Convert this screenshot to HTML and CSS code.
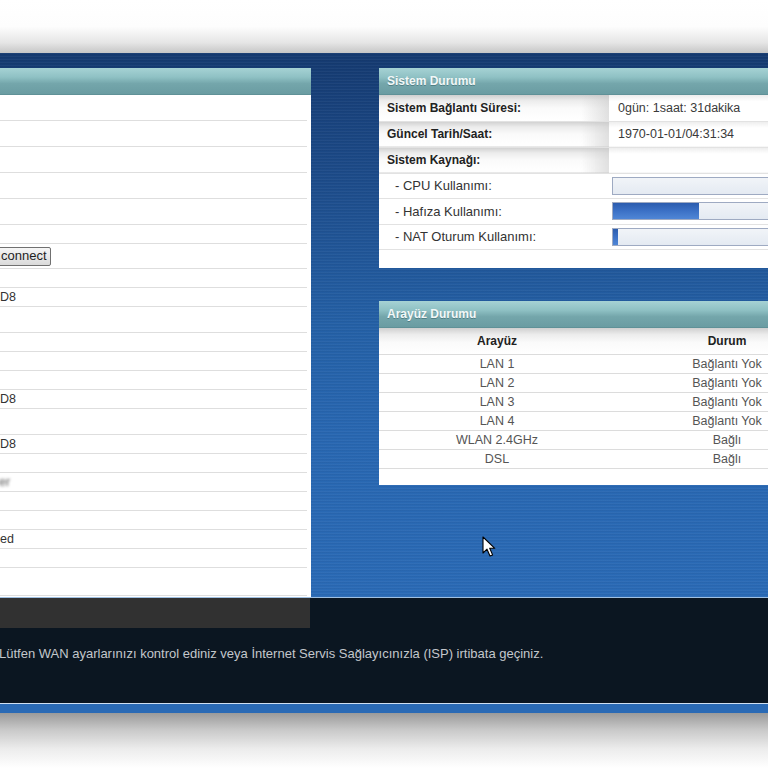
FILE: index.html
```html
<!DOCTYPE html>
<html lang="tr">
<head>
<meta charset="utf-8">
<title>Durum</title>
<link rel="stylesheet" href="styles.css">
</head>
<body>
<div class="screen">
  <div class="top-fade"></div>

  <main class="stage">
    <section class="panel panel-left">
      <div class="panel-head"></div>
      <div class="lrow lrow-first"></div>
      <div class="lrow lrow-tall"></div>
      <div class="lrow lrow-tall"></div>
      <div class="lrow lrow-tall"></div>
      <div class="lrow lrow-tall"></div>
      <div class="lrow"></div>
      <div class="lrow lrow-btn"><button class="btn" type="button">connect</button></div>
      <div class="lrow"></div>
      <div class="lrow"><span class="val">D8</span></div>
      <div class="lrow lrow-tall"></div>
      <div class="lrow"></div>
      <div class="lrow"></div>
      <div class="lrow"></div>
      <div class="lrow"><span class="val">D8</span></div>
      <div class="lrow lrow-tall"></div>
      <div class="lrow"><span class="val">D8</span></div>
      <div class="lrow"></div>
      <div class="lrow"><span class="val val-blur">er</span></div>
      <div class="lrow"></div>
      <div class="lrow"></div>
      <div class="lrow"><span class="val">ed</span></div>
      <div class="lrow"></div>
      <div class="lrow lrow-last"></div>
    </section>

    <div class="right-col">
      <section class="panel panel-status">
        <div class="panel-head">Sistem Durumu</div>
        <table class="status-table">
          <tr>
            <th class="lbl">Sistem Bağlantı Süresi:</th>
            <td class="val-cell">0gün: 1saat: 31dakika</td>
          </tr>
          <tr>
            <th class="lbl">Güncel Tarih/Saat:</th>
            <td class="val-cell">1970-01-01/04:31:34</td>
          </tr>
          <tr>
            <th class="lbl">Sistem Kaynağı:</th>
            <td class="val-cell"></td>
          </tr>
          <tr class="sub">
            <td class="sub-lbl">- CPU Kullanımı:</td>
            <td class="bar-cell"><div class="bar"><div class="bar-fill" style="width:0%"></div></div></td>
          </tr>
          <tr class="sub">
            <td class="sub-lbl">- Hafıza Kullanımı:</td>
            <td class="bar-cell"><div class="bar"><div class="bar-fill" style="width:36%"></div></div></td>
          </tr>
          <tr class="sub">
            <td class="sub-lbl">- NAT Oturum Kullanımı:</td>
            <td class="bar-cell"><div class="bar"><div class="bar-fill" style="width:2%"></div></div></td>
          </tr>
        </table>
      </section>

      <section class="panel panel-iface">
        <div class="panel-head">Arayüz Durumu</div>
        <table class="iface-table">
          <tr class="iface-head">
            <th>Arayüz</th>
            <th>Durum</th>
          </tr>
          <tr><td>LAN 1</td><td>Bağlantı Yok</td></tr>
          <tr><td>LAN 2</td><td>Bağlantı Yok</td></tr>
          <tr><td>LAN 3</td><td>Bağlantı Yok</td></tr>
          <tr><td>LAN 4</td><td>Bağlantı Yok</td></tr>
          <tr><td>WLAN 2.4GHz</td><td>Bağlı</td></tr>
          <tr><td>DSL</td><td>Bağlı</td></tr>
        </table>
      </section>
    </div>

    <svg class="cursor" width="14" height="22" viewBox="0 0 14 22" aria-hidden="true">
      <path d="M1 1 L1 17 L5 13.2 L8 20 L10.6 18.9 L7.7 12.3 L12.8 12.3 Z" fill="#fff" stroke="#000" stroke-width="1.1" stroke-linejoin="round"/>
    </svg>
  </main>

  <footer class="footer">
    <div class="footer-tab"></div>
    <p class="footer-msg">Lütfen WAN ayarlarınızı kontrol ediniz veya İnternet Servis Sağlayıcınızla (ISP) irtibata geçiniz.</p>
  </footer>

  <div class="bottom-band"></div>
  <div class="bottom-shadow"></div>
</div>
</body>
</html>
```

FILE: styles.css
```css
html, body {
  margin: 0;
  padding: 0;
}

body {
  width: 768px;
  height: 768px;
  overflow: hidden;
  background: #ffffff;
  font-family: "Liberation Sans", Arial, sans-serif;
  color: #333;
}

.screen {
  width: 768px;
  height: 768px;
  overflow: hidden;
  display: flex;
  flex-direction: column;
}

/* soft grey fade above the blue frame */
.top-fade {
  height: 53px;
  flex: none;
  background: linear-gradient(to bottom, #ffffff 0%, #fdfdfd 50%, #e6e6e6 80%, #c6c6c6 100%);
}

/* blue desktop with fine horizontal scan lines */
.stage {
  position: relative;
  flex: none;
  height: 544px;
  box-sizing: border-box;
  padding-top: 15px;
  display: flex;
  align-items: flex-start;
  gap: 68px;
  background:
    repeating-linear-gradient(to bottom, rgba(255,255,255,0.035) 0 1px, rgba(0,0,0,0.035) 1px 2px, rgba(0,0,0,0) 2px 3px),
    linear-gradient(to bottom, #153a70 0%, #19437e 12%, #1f5191 30%, #2460a6 50%, #2867b1 70%, #2a6ab5 100%);
}

.panel {
  background: #ffffff;
  flex: none;
}

.panel-head {
  height: 27px;
  box-sizing: border-box;
  border-bottom: 1px solid #5f9197;
  background: linear-gradient(to bottom, #a6d2d4 0%, #8fc1c4 35%, #74a6ab 60%, #6a9ca2 100%);
  color: #f2f8f8;
  font-weight: bold;
  font-size: 12px;
  line-height: 27px;
  padding-left: 8px;
  text-shadow: 0 1px 0 rgba(40, 80, 85, 0.45);
  white-space: nowrap;
}

/* left panel: only its value column is on screen */
.panel-left {
  width: 314px;
  height: 529px;
  margin-left: -3px;
  overflow: hidden;
}

.lrow {
  height: 18px;
  border-bottom: 1px solid #dedede;
  margin-right: 4px;
  display: flex;
  align-items: center;
  font-size: 12.5px;
  color: #333;
}

.lrow-first { height: 25px; }
.lrow-tall { height: 25px; }
.lrow-btn { height: 24px; }
.lrow-last { height: 27px; }

.val {
  padding-left: 3px;
  line-height: 1;
}

.val-blur {
  color: #5c5c5c;
  filter: blur(1.4px);
  padding-left: 2px;
}

.btn {
  font-family: "Liberation Sans", Arial, sans-serif;
  font-size: 13px;
  color: #1e1e1e;
  height: 19px;
  padding: 0 3px 0 3px;
  margin: 0;
  border: 1px solid #707070;
  border-radius: 2px;
  background: linear-gradient(to bottom, #f6f6f6 0%, #e8e8e8 50%, #dadada 100%);
  line-height: 16px;
}

/* right column with the two status panels */
.right-col {
  width: 460px;
  flex: none;
  display: flex;
  flex-direction: column;
  gap: 33px;
}

.panel-status {
  height: 200px;
  box-sizing: border-box;
}

.status-table {
  width: 100%;
  border-collapse: collapse;
  table-layout: fixed;
}

.status-table tr {
  height: 26px;
}

.status-table tr.sub {
  height: 25.6px;
}

.status-table th,
.status-table td {
  padding: 0;
  border-bottom: 1px solid #e2e2e2;
  white-space: nowrap;
  overflow: hidden;
}

.status-table .lbl {
  width: 230px;
  text-align: left;
  padding-left: 8px;
  box-sizing: border-box;
  font-size: 12px;
  font-weight: bold;
  color: #222;
  background:
    linear-gradient(to right, rgba(255,255,255,0) 88%, rgba(200,200,200,0.55) 100%),
    linear-gradient(to bottom, #cfcfcf 0%, #ececec 22%, #fafafa 50%, #ffffff 100%);
}

.status-table .val-cell {
  padding-left: 9px;
  font-size: 12.5px;
  color: #3a3a3a;
  background: linear-gradient(to bottom, #ececec 0%, #ffffff 25%);
}

.status-table .sub-lbl {
  padding-left: 16px;
  font-size: 13px;
  color: #333;
}

.status-table .bar-cell {
  padding-left: 3px;
}

.bar {
  height: 18px;
  box-sizing: border-box;
  border: 1px solid #9eaac2;
  background: linear-gradient(to bottom, #f1f4f8 0%, #e4eaf2 100%);
  width: 240px;
}

.bar-fill {
  height: 100%;
  background: linear-gradient(to bottom, #2b5cae 0%, #3a6fc4 45%, #4f86d6 100%);
}

.panel-iface {
  height: 184px;
  box-sizing: border-box;
}

.iface-table {
  width: 100%;
  border-collapse: collapse;
  table-layout: fixed;
}

.iface-table th,
.iface-table td {
  padding: 0;
  text-align: center;
  white-space: nowrap;
  border-bottom: 1px solid #dcdcdc;
}

.iface-table th:first-child,
.iface-table td:first-child {
  width: 236px;
}

.iface-head {
  height: 26px;
  background: linear-gradient(to bottom, #cfcfcf 0%, #ececec 25%, #fafafa 55%, #ffffff 100%);
}

.iface-head th {
  font-size: 12px;
  font-weight: bold;
  color: #222;
}

.iface-table td {
  height: 18px;
  font-size: 12.5px;
  color: #555;
}

.cursor {
  position: absolute;
  left: 482px;
  top: 483px;
}

/* dark status strip */
.footer {
  flex: none;
  height: 106px;
  box-sizing: border-box;
  border-top: 1px solid #9fc0e2;
  background: #0b1621;
}

.footer-tab {
  width: 310px;
  height: 30px;
  background: #313131;
}

.footer-msg {
  margin: 19px 0 0 -1px;
  font-size: 13px;
  line-height: 14px;
  color: #c3c7cc;
  white-space: nowrap;
}

.bottom-band {
  flex: none;
  height: 10px;
  box-sizing: border-box;
  border-top: 1px solid #cfe0f2;
  background: #2a6ab5;
}

.bottom-shadow {
  flex: none;
  height: 55px;
  background: linear-gradient(to bottom, #9a9a9a 0%, #c8c8c8 30%, #ececec 65%, #ffffff 100%);
}
```
